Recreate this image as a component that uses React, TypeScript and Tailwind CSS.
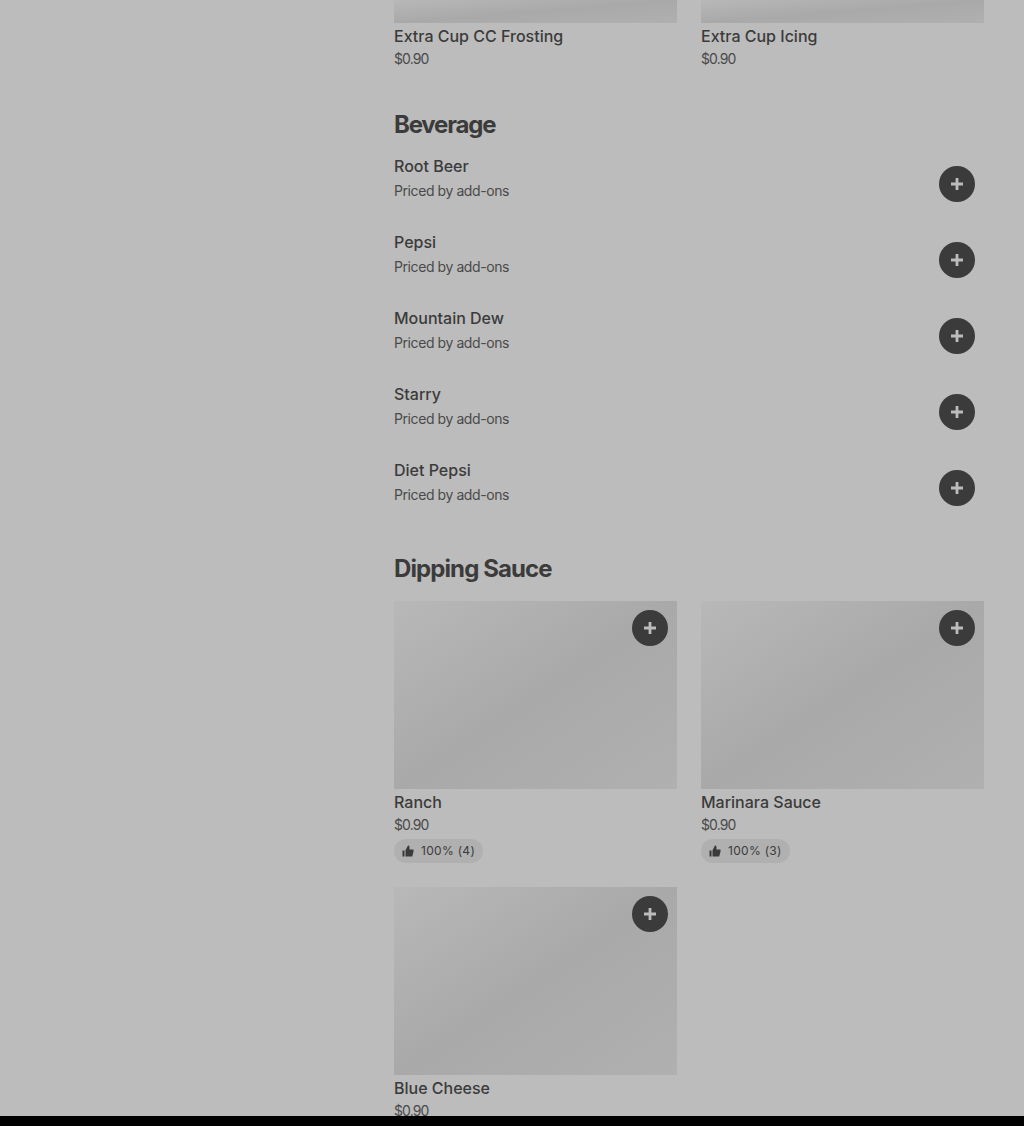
import React from "react";

const font = "font-['Inter','Liberation_Sans',sans-serif]";

function PlusButton({ className = "" }: { className?: string }) {
  return (
    <div className={`flex h-9 w-9 items-center justify-center rounded-full bg-[#3b3b3b] ${className}`}>
      <svg width="14" height="14" viewBox="0 0 14 14" fill="none">
        <path d="M5.6 1h2.8v4.6H13v2.8H8.4V13H5.6V8.4H1V5.6h4.6z" fill="#bcbcbc" />
      </svg>
    </div>
  );
}

function Thumb() {
  return (
    <svg width="12" height="12" viewBox="0 0 12 12" fill="#3b3b3b">
      <path d="M0.5 5.5h2v6h-2zM3.5 11.5V5.3L6 .6c.9 0 1.5.6 1.5 1.5V4.5h4v2.2l-1.3 4.8z" />
    </svg>
  );
}

function Card({
  name,
  rating,
  imageClass = "h-[188px]",
  plus = true,
}: {
  name: string;
  rating?: string;
  imageClass?: string;
  plus?: boolean;
}) {
  return (
    <div className="w-[283px]">
      <div className={`relative bg-gradient-to-br from-[#b8b8b8] via-[#a9a9a9] to-[#b0b0b0] ${imageClass}`}>
        {plus && <PlusButton className="absolute right-[9px] top-[9px]" />}
      </div>
      <div className="mt-[1px] text-base leading-6 font-medium tracking-[0px] text-[#3b3b3b]">{name}</div>
      <div className="text-sm leading-[22px] tracking-[-0.9px] text-[#4a4a4a]">$0.90</div>
      {rating && (
        <div className="mt-[3px] flex h-6 w-[89px] items-center gap-[7px] rounded-full bg-[#b0b0b0] pl-2 text-xs tracking-[0.3px] text-[#3b3b3b]">
          <Thumb />
          <span>{rating}</span>
        </div>
      )}
    </div>
  );
}

function Row({ name }: { name: string }) {
  return (
    <div className="flex h-[76px] items-start justify-between pr-[9px]">
      <div>
        <div className="text-base leading-6 font-medium tracking-[0px] text-[#3b3b3b]">{name}</div>
        <div className="mt-[1px] text-sm leading-6 tracking-[-0.42px] text-[#4a4a4a]">Priced by add-ons</div>
      </div>
      <PlusButton className="mt-[12px]" />
    </div>
  );
}

export default function App() {
  return (
    <div className={`h-[1126px] w-[1024px] overflow-hidden bg-black ${font}`}>
      <div className="h-[1116px] overflow-hidden bg-[#bcbcbc] pl-[394px] pr-[40px]">
        <div className="grid grid-cols-[283px_283px] gap-x-6">
          <Card name="Extra Cup CC Frosting" imageClass="h-[23px]" plus={false} />
          <Card name="Extra Cup Icing" imageClass="h-[23px]" plus={false} />
        </div>
        <h2 className="mt-[39px] text-2xl leading-8 font-bold tracking-[-1.2px] text-[#3b3b3b]">Beverage</h2>
        <div className="mt-[13px]">
          <Row name="Root Beer" />
          <Row name="Pepsi" />
          <Row name="Mountain Dew" />
          <Row name="Starry" />
          <Row name="Diet Pepsi" />
        </div>
        <h2 className="mt-[19px] text-2xl leading-8 font-bold tracking-[-0.9px] text-[#3b3b3b]">Dipping Sauce</h2>
        <div className="mt-4 grid grid-cols-[283px_283px] gap-x-6 gap-y-6">
          <Card name="Ranch" rating="100% (4)" />
          <Card name="Marinara Sauce" rating="100% (3)" />
          <Card name="Blue Cheese" />
        </div>
      </div>
    </div>
  );
}
